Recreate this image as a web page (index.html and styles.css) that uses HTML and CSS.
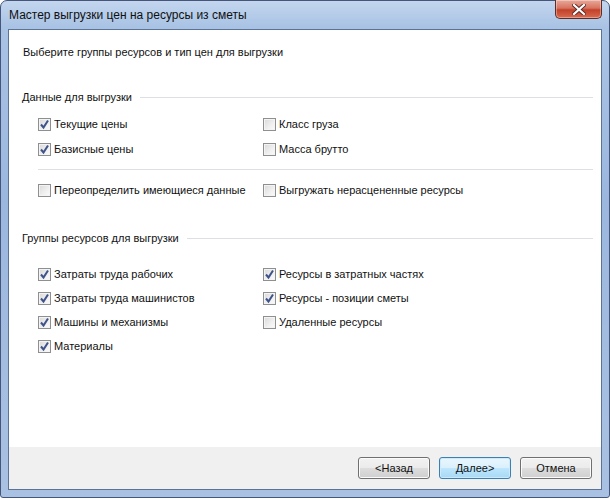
FILE: index.html
```html
<!DOCTYPE html>
<html lang="ru">
<head>
    <meta charset="UTF-8">
    <title>Мастер выгрузки цен на ресурсы из сметы</title>
    <link rel="stylesheet" href="styles.css">
</head>
<body>
    <div class="window">
        <div class="titlebar">
            <span class="title">Мастер выгрузки цен на ресурсы из сметы</span>
            <div class="close">
                <svg width="14" height="11" viewBox="0 0 14 11">
                    <path d="M2 1 L12 10 M12 1 L2 10" stroke="#5a2a25" stroke-width="4" stroke-linecap="square"/>
                    <path d="M2 1 L12 10 M12 1 L2 10" stroke="#ffffff" stroke-width="2.2" stroke-linecap="square"/>
                </svg>
            </div>
        </div>
        <div class="client">
            <div class="content">
                <p class="lead">Выберите группы ресурсов и тип цен для выгрузки</p>

                <div class="group-head head-data"><span>Данные для выгрузки</span></div>
                <div class="checks first">
                    <label class="check"><span class="box on"><svg width="11" height="11" viewBox="0 0 11 11"><path d="M2 5.5 L4.5 8.5 L9 1.5" fill="none" stroke="#3f5289" stroke-width="2"/></svg></span>Текущие цены</label>
                    <label class="check"><span class="box"></span>Класс груза</label>
                    <label class="check"><span class="box on"><svg width="11" height="11" viewBox="0 0 11 11"><path d="M2 5.5 L4.5 8.5 L9 1.5" fill="none" stroke="#3f5289" stroke-width="2"/></svg></span>Базисные цены</label>
                    <label class="check"><span class="box"></span>Масса брутто</label>
                </div>
                <div class="sep"></div>
                <div class="checks">
                    <label class="check"><span class="box"></span>Переопределить имеющиеся данные</label>
                    <label class="check"><span class="box"></span>Выгружать нерасцененные ресурсы</label>
                </div>

                <div class="group-head head-groups"><span>Группы ресурсов для выгрузки</span></div>
                <div class="checks tight">
                    <label class="check"><span class="box on"><svg width="11" height="11" viewBox="0 0 11 11"><path d="M2 5.5 L4.5 8.5 L9 1.5" fill="none" stroke="#3f5289" stroke-width="2"/></svg></span>Затраты труда рабочих</label>
                    <label class="check"><span class="box on"><svg width="11" height="11" viewBox="0 0 11 11"><path d="M2 5.5 L4.5 8.5 L9 1.5" fill="none" stroke="#3f5289" stroke-width="2"/></svg></span>Ресурсы в затратных частях</label>
                    <label class="check"><span class="box on"><svg width="11" height="11" viewBox="0 0 11 11"><path d="M2 5.5 L4.5 8.5 L9 1.5" fill="none" stroke="#3f5289" stroke-width="2"/></svg></span>Затраты труда машинистов</label>
                    <label class="check"><span class="box on"><svg width="11" height="11" viewBox="0 0 11 11"><path d="M2 5.5 L4.5 8.5 L9 1.5" fill="none" stroke="#3f5289" stroke-width="2"/></svg></span>Ресурсы - позиции сметы</label>
                    <label class="check"><span class="box on"><svg width="11" height="11" viewBox="0 0 11 11"><path d="M2 5.5 L4.5 8.5 L9 1.5" fill="none" stroke="#3f5289" stroke-width="2"/></svg></span>Машины и механизмы</label>
                    <label class="check"><span class="box"></span>Удаленные ресурсы</label>
                    <label class="check"><span class="box on"><svg width="11" height="11" viewBox="0 0 11 11"><path d="M2 5.5 L4.5 8.5 L9 1.5" fill="none" stroke="#3f5289" stroke-width="2"/></svg></span>Материалы</label>
                </div>
            </div>
            <div class="footer">
                <button class="btn">&lt;Назад</button>
                <button class="btn default">Далее&gt;</button>
                <button class="btn">Отмена</button>
            </div>
        </div>
    </div>
</body>
</html>
```

FILE: styles.css
```css
body {
    margin: 0;
    background: #ffffff;
    font-family: "Liberation Sans", Arial, sans-serif;
    font-size: 11px;
    color: #111111;
}

.window {
    width: 610px;
    height: 498px;
    box-sizing: border-box;
    border: 1px solid #45567a;
    border-radius: 7px 7px 3px 3px;
    background: linear-gradient(180deg, #c3d6ee 0px, #a9c3e5 26px, #9cb7de 200px, #a9c2e3 498px);
    padding: 0 7px 7px 7px;
    display: flex;
    flex-direction: column;
}

/* title bar */
.titlebar {
    height: 28px;
    display: flex;
    align-items: flex-start;
    justify-content: space-between;
}

.title {
    margin-top: 7px;
    margin-left: 1px;
    font-size: 12px;
    color: #101010;
}

.close {
    width: 47px;
    height: 19px;
    margin-top: -1px;
    margin-right: 0;
    box-sizing: border-box;
    border: 1px solid #5e2d28;
    border-top: none;
    border-radius: 0 0 5px 5px;
    background: linear-gradient(180deg, #e9a99a 0%, #d7735f 45%, #c2412a 55%, #d86a4f 100%);
    box-shadow: inset 0 0 0 1px rgba(255, 255, 255, 0.35);
    display: flex;
    align-items: center;
    justify-content: center;
}

/* client area */
.client {
    flex: 1;
    background: #ffffff;
    border: 1px solid #5d7396;
    display: flex;
    flex-direction: column;
}

.content {
    flex: 1;
    padding: 0 8px 0 13px;
}

.lead {
    margin: 14px 0 0 1px;
    line-height: 16px;
}

.group-head {
    display: flex;
    align-items: center;
    gap: 8px;
    line-height: 16px;
}

.group-head::after {
    content: "";
    flex: 1;
    height: 1px;
    background: #dcdfe3;
}

.head-data {
    margin-top: 29px;
}

.head-groups {
    margin-top: 28px;
}

.checks {
    display: grid;
    grid-template-columns: 225px auto;
    padding-left: 16px;
}

.checks.first {
    margin-top: 7px;
    row-gap: 1px;
}

.checks.tight {
    margin-top: 16px;
}

.check {
    height: 24px;
    display: flex;
    align-items: center;
    gap: 3px;
}

.box {
    width: 13px;
    height: 13px;
    box-sizing: border-box;
    border: 1px solid #8e8f8f;
    background: linear-gradient(135deg, #d9d9d9 0%, #f0f0f0 60%, #fbfbfb 100%);
    box-shadow: inset 0 0 0 1px #f4f4f4;
    display: flex;
    align-items: center;
    justify-content: center;
}

.sep {
    height: 1px;
    background: #dcdfe3;
    margin: 8px 0 8px 16px;
}

/* bottom button strip */
.footer {
    height: 42px;
    background: #f0f0f0;
    display: flex;
    justify-content: flex-end;
    align-items: center;
    gap: 9px;
    padding-right: 9px;
}

.btn {
    width: 72px;
    height: 22px;
    font-family: inherit;
    font-size: 11px;
    color: #111111;
    border: 1px solid #707070;
    border-radius: 3px;
    background: linear-gradient(180deg, #f2f2f2 0%, #ebebeb 50%, #dddddd 51%, #cfcfcf 100%);
    box-shadow: inset 0 0 0 1px #fbfbfb;
    padding: 0;
}

.btn.default {
    border-color: #3c7fb1;
    background: linear-gradient(180deg, #eaf6fd 0%, #d9f0fc 50%, #bee6fd 51%, #a7d9f5 100%);
    box-shadow: inset 0 0 0 1px #cbeafb;
}
```
